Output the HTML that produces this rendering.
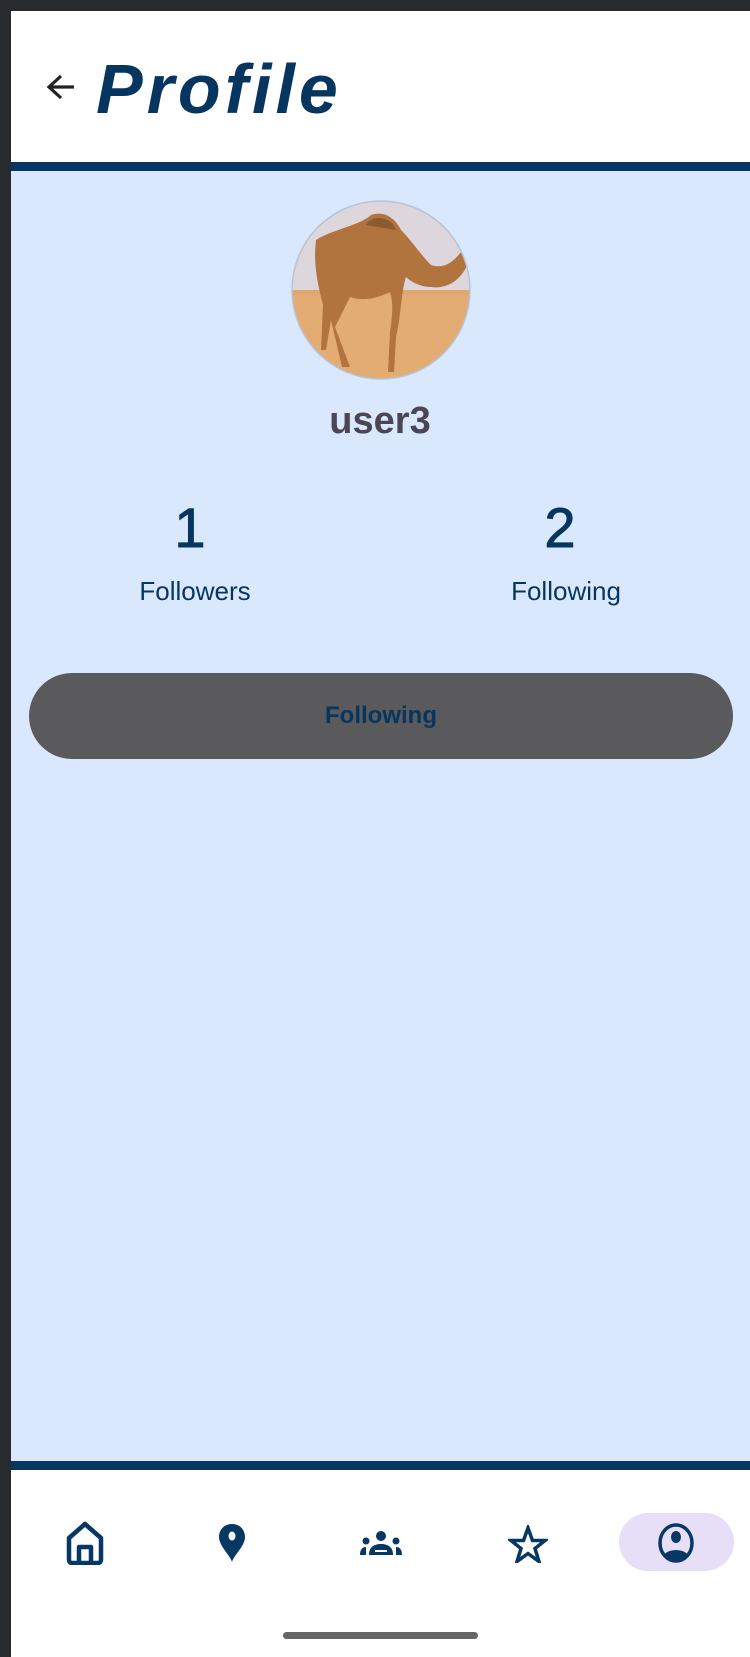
<!DOCTYPE html>
<html><head><meta charset="utf-8"><style>
*{margin:0;padding:0;box-sizing:border-box}
body{width:750px;height:1657px;background:#272b2f;position:relative;overflow:hidden;font-family:"Liberation Sans",sans-serif}
.abs{position:absolute}
.t{position:absolute;white-space:nowrap;text-align:center;transform:translateX(-50%)}
</style></head><body>
<div class="abs" style="left:11px;top:11px;width:739px;height:1646px;background:#fff"></div>
<div class="abs" style="left:11px;top:171px;width:739px;height:1290px;background:#dae8fd"></div>
<div class="abs" style="left:11px;top:162px;width:739px;height:9px;background:#073763"></div>
<div class="abs" style="left:11px;top:1461px;width:739px;height:9px;background:#073763"></div>
<svg class="abs" style="left:44px;top:72px" width="34" height="30" viewBox="0 0 34 30"><path d="M30 15H6M17 4L5 15l12 11" fill="none" stroke="#222" stroke-width="3.2"/></svg>
<div class="abs" style="left:96px;top:46px;font-size:70px;font-weight:bold;font-style:italic;color:#06365f;letter-spacing:4px;line-height:86px">Profile</div>
<svg class="abs" style="left:291px;top:200px" width="180" height="180" viewBox="0 0 180 180">
<defs><clipPath id="c"><circle cx="90" cy="90" r="89"/></clipPath></defs>
<g clip-path="url(#c)">
<rect width="180" height="180" fill="#ddd6dc"/>
<rect y="90" width="180" height="90" fill="#e0a86e"/>
<path d="M0 95h180v85H0z" fill="#e3ac72"/>
<path d="M25 40C40 30 70 25 80 15c15-5 25 5 30 15 10 10 20 25 30 35 15 5 25-5 35-20l5 10c-5 20-20 35-40 32-10 0-20-5-25-10-5 15-5 40-10 60l-2 35h-6l2-40c3-20 3-30 0-40-10 5-25 10-40 5l-15 30 15 40h-8L40 120 35 150h-5l2-45c-5-20-10-40-7-65z" fill="#b2743e"/>
<path d="M75 25c5-10 25-10 30 5" fill="#8a5a30"/>
</g>
<circle cx="90" cy="90" r="89" fill="none" stroke="#b7c4d8" stroke-width="1.5"/>
</svg>
<div class="t" style="left:380px;top:400px;font-size:38px;font-weight:bold;color:#4a4654">user3</div>
<div class="t" style="left:190px;top:495px;font-size:56px;color:#06365f;-webkit-text-stroke:1px #06365f">1</div>
<div class="t" style="left:560px;top:495px;font-size:56px;color:#06365f;-webkit-text-stroke:1px #06365f">2</div>
<div class="t" style="left:195px;top:576px;font-size:26px;color:#06365f">Followers</div>
<div class="t" style="left:566px;top:576px;font-size:26px;color:#06365f">Following</div>
<div class="abs" style="left:29px;top:673px;width:704px;height:86px;border-radius:43px;background:#5a5a5c"></div>
<div class="t" style="left:381px;top:702px;font-size:24px;font-weight:bold;color:#06365f">Following</div>
<div class="abs" style="left:619px;top:1513px;width:115px;height:58px;border-radius:29px;background:#e7def7"></div>
<svg class="abs" style="left:66px;top:1521px" width="38" height="44" viewBox="0 0 38 44"><path d="M3 17L19 3l16 14v22a3 3 0 0 1-3 3H6a3 3 0 0 1-3-3z M13 40V26h12v14" fill="none" stroke="#073763" stroke-width="4.5" stroke-linejoin="round"/></svg>
<svg class="abs" style="left:218px;top:1523px" width="28" height="40" viewBox="0 0 28 40"><path d="M14 1C6 1 1 7 1 14c0 9 11 18 13 25 2-7 13-16 13-25C27 7 22 1 14 1z" fill="#073763"/><ellipse cx="14" cy="13" rx="3.5" ry="4.5" fill="#fff"/></svg>
<svg class="abs" style="left:359px;top:1530px" width="44" height="26" viewBox="0 0 44 26"><g fill="#073763"><circle cx="22" cy="6" r="5"/><circle cx="7" cy="11" r="3.5"/><circle cx="37" cy="11" r="3.5"/><path d="M10 25c0-8 5-11 12-11s12 3 12 11z"/><path d="M1 25c0-5 2-8 6-8v8z M43 25c0-5-2-8-6-8v8z"/></g><path d="M16 21h12" stroke="#fff" stroke-width="2"/></svg>
<svg class="abs" style="left:508px;top:1525px" width="40" height="38" viewBox="0 0 40 38"><path d="M20 3l4.5 12.5H37l-10 8 4 13L20 28.5 9 36.5l4-13-10-8h12.5z" fill="none" stroke="#073763" stroke-width="3.5" stroke-linejoin="miter"/></svg>
<svg class="abs" style="left:656px;top:1522px" width="40" height="42" viewBox="0 0 40 42"><defs><clipPath id="p"><ellipse cx="20" cy="21" rx="15" ry="17"/></clipPath></defs><ellipse cx="20" cy="21" rx="16" ry="18" fill="none" stroke="#073763" stroke-width="3.5"/><g clip-path="url(#p)" fill="#073763"><ellipse cx="20" cy="15" rx="5" ry="6"/><ellipse cx="20" cy="38" rx="14" ry="10"/></g></svg>
<div class="abs" style="left:283px;top:1632px;width:195px;height:7px;border-radius:4px;background:#666"></div>
</body></html>
